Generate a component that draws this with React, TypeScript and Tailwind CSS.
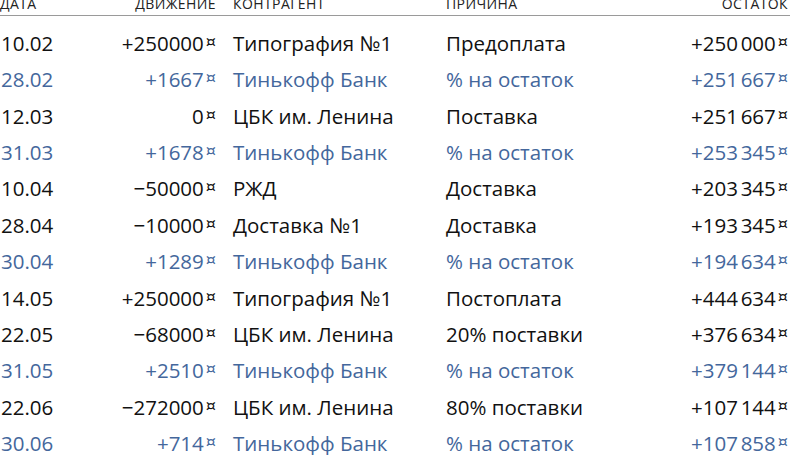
type Row = {
  date: string
  move: string
  party: string
  reason: string
  rest: string
  bank?: boolean
}

const rows: Row[] = [
  { date: '10.02', move: '+250000', party: 'Типография №1', reason: 'Предоплата', rest: '+250\u202F000' },
  { date: '28.02', move: '+1667', party: 'Тинькофф Банк', reason: '% на остаток', rest: '+251\u202F667', bank: true },
  { date: '12.03', move: '0', party: 'ЦБК им. Ленина', reason: 'Поставка', rest: '+251\u202F667' },
  { date: '31.03', move: '+1678', party: 'Тинькофф Банк', reason: '% на остаток', rest: '+253\u202F345', bank: true },
  { date: '10.04', move: '\u221250000', party: 'РЖД', reason: 'Доставка', rest: '+203\u202F345' },
  { date: '28.04', move: '\u221210000', party: 'Доставка №1', reason: 'Доставка', rest: '+193\u202F345' },
  { date: '30.04', move: '+1289', party: 'Тинькофф Банк', reason: '% на остаток', rest: '+194\u202F634', bank: true },
  { date: '14.05', move: '+250000', party: 'Типография №1', reason: 'Постоплата', rest: '+444\u202F634' },
  { date: '22.05', move: '\u221268000', party: 'ЦБК им. Ленина', reason: '20% поставки', rest: '+376\u202F634' },
  { date: '31.05', move: '+2510', party: 'Тинькофф Банк', reason: '% на остаток', rest: '+379\u202F144', bank: true },
  { date: '22.06', move: '\u2212272000', party: 'ЦБК им. Ленина', reason: '80% поставки', rest: '+107\u202F144' },
  { date: '30.06', move: '+714', party: 'Тинькофф Банк', reason: '% на остаток', rest: '+107\u202F858', bank: true },
]

function Money({ value }: { value: string }) {
  return (
    <span className="whitespace-nowrap">
      {value}
      <span className="relative top-[-4px] ml-[2px] font-['DejaVu_Sans',sans-serif] text-[16px]">¤</span>
    </span>
  )
}

export default function App() {
  return (
    <div className="h-[455px] w-[790px] overflow-hidden bg-white font-['Open_Sans',sans-serif] text-[#111]">
      <div className="h-[20px] border-b border-[#9a9a9a]">
        <div className="mt-[-4px] grid grid-cols-[100px_116px_230px_1fr_auto] pr-[2px] text-[14px] leading-[16px] tracking-[0.4px] text-[#222]">
          <div>ДАТА</div>
          <div className="text-right">ДВИЖЕНИЕ</div>
          <div className="pl-[17px]">КОНТРАГЕНТ</div>
          <div>ПРИЧИНА</div>
          <div className="text-right">ОСТАТОК</div>
        </div>
      </div>
      <div className="pt-[9px]">
        {rows.map((r) => (
          <div
            key={r.date}
            className={`grid h-[36.36px] grid-cols-[100px_116px_230px_1fr_auto] pr-[2px] text-[20.5px] leading-[36.36px] ${
              r.bank ? 'text-[#44679c]' : 'text-[#111]'
            }`}
          >
            <div className="pl-[1px]">{r.date}</div>
            <div className="text-right">
              <Money value={r.move} />
            </div>
            <div className="pl-[17px] whitespace-nowrap">{r.party}</div>
            <div className="whitespace-nowrap">{r.reason}</div>
            <div className="text-right">
              <Money value={r.rest} />
            </div>
          </div>
        ))}
      </div>
    </div>
  )
}
